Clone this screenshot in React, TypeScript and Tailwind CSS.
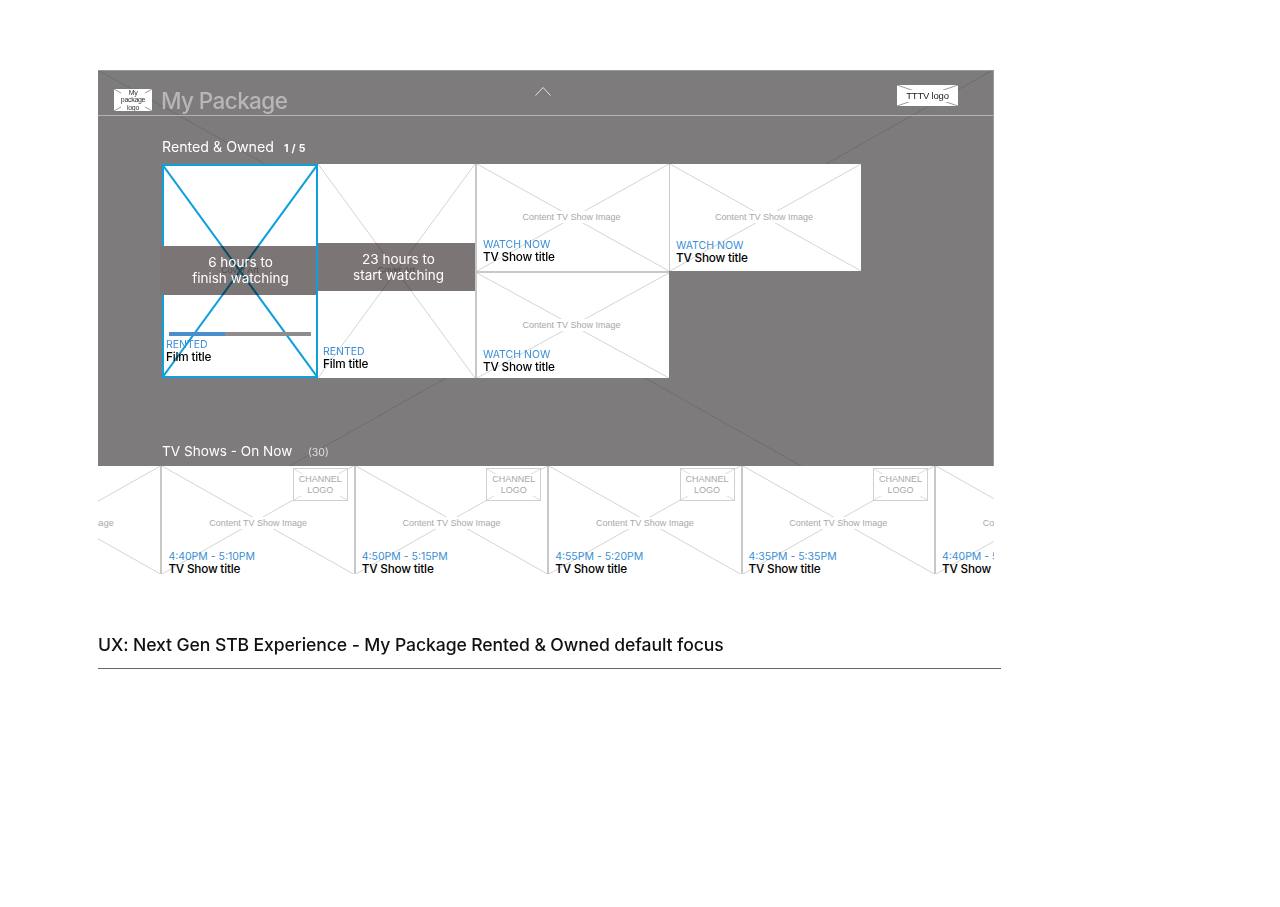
const ui = { fontFamily: '"Inter", "Noto Sans", sans-serif' };
const ph = { fontFamily: '"Liberation Sans", Arial, sans-serif' };

function Cross({ color = '#d4d4d4', width = 1 }: { color?: string; width?: number }) {
  return (
    <svg className="absolute inset-0 h-full w-full" viewBox="0 0 100 100" preserveAspectRatio="none" aria-hidden="true">
      <line x1="0" y1="0" x2="100" y2="100" stroke={color} strokeWidth={width} vectorEffect="non-scaling-stroke" />
      <line x1="100" y1="0" x2="0" y2="100" stroke={color} strokeWidth={width} vectorEffect="non-scaling-stroke" />
    </svg>
  );
}

function ImageLabel({ className }: { className: string }) {
  return (
    <div className={`absolute inset-0 flex items-center justify-center ${className}`}>
      <span className="bg-white px-1 text-[9px] leading-[12px] whitespace-nowrap text-[#a8a8a8]" style={ph}>
        Content TV Show Image
      </span>
    </div>
  );
}

function TextBlock({ eyebrow, title, className }: { eyebrow: string; title: string; className: string }) {
  return (
    <div className={`relative ${className}`}>
      <div className="text-[10.5px] leading-[13px] whitespace-nowrap text-[#3a8fd6]">{eyebrow}</div>
      <div className="text-[11.75px] leading-[13px] font-medium tracking-[-0.2px] whitespace-nowrap text-black">{title}</div>
    </div>
  );
}

function TvCard({ eyebrow, size, pad }: { eyebrow: string; size: string; pad: string }) {
  return (
    <div className={`relative flex flex-col justify-end bg-white ${size}`}>
      <Cross />
      <ImageLabel className="pr-[3px] pb-[2px]" />
      <TextBlock eyebrow={eyebrow} title="TV Show title" className={pad} />
    </div>
  );
}

function PosterCard({
  hours,
  line2,
  focused,
  band,
  bandText,
  pad,
}: {
  hours: string;
  line2: string;
  focused?: boolean;
  band: string;
  bandText: string;
  pad: string;
}) {
  return (
    <div className={`relative flex flex-col justify-end bg-white ${focused ? 'h-[214px] w-[156px]' : 'h-[214px] w-[157px]'}`}>
      {focused ? <Cross color="#0f9fdc" width={2} /> : <Cross />}
      <div className="absolute inset-0 flex items-center justify-center pb-[1px]">
        <span className="text-[9px] text-[#a8a8a8]" style={ph}>Cover Art</span>
      </div>
      {focused && <div className="absolute inset-0 border-2 border-[#0f9fdc]" />}
      <div className={`absolute bg-[#7b7675] mix-blend-multiply ${band}`} />
      {focused && <div className="absolute top-[82px] -left-[2px] h-[49px] w-[4px] bg-[#7b7675]" />}
      <div className={`absolute flex flex-col items-center justify-center text-[13.5px] leading-[16px] text-white ${bandText}`}>
        <span>{hours}</span>
        <span>{line2}</span>
      </div>
      {focused && (
        <div className="relative mx-[7px] mb-[2px] flex h-[4px] bg-[#8e8c8d]">
          <div className="h-full w-[56px] bg-[#4a8fcb]" />
        </div>
      )}
      <TextBlock eyebrow="RENTED" title="Film title" className={pad} />
    </div>
  );
}

function StripCard({ time, logo = true }: { time: string; logo?: boolean }) {
  return (
    <div className="relative flex h-[108px] w-[193.4px] shrink-0 flex-col justify-end overflow-hidden border-l-2 border-[#c8c8c8] bg-white">
      <Cross />
      <ImageLabel className="pt-[6px]" />
      {logo && (
        <div className="absolute top-[2px] right-[6px] flex h-[33px] w-[55px] items-center justify-center border border-[#d0d0d0] bg-white">
          <Cross color="#dcdcdc" />
          <span className="relative bg-white text-center text-[9px] leading-[11px] text-[#a8a8a8]" style={ph}>
            CHANNEL
            <br />
            LOGO
          </span>
        </div>
      )}
      <TextBlock eyebrow={time} title="TV Show title" className="-mb-[2px] pl-[6px]" />
    </div>
  );
}

export default function App() {
  const times = ['4:40PM - 5:10PM', '4:40PM - 5:10PM', '4:50PM - 5:15PM', '4:55PM - 5:20PM', '4:35PM - 5:35PM', '4:40PM - 5:10PM'];
  return (
    <div className="h-[907px] w-[1280px] overflow-hidden bg-white pt-[70px] pl-[98px]" style={ui}>
      <div className="relative h-[396px] w-[896px] overflow-hidden border-t border-r border-[#9a9a9a] bg-[#7d7b7c]">
        <svg className="absolute top-[-1px] left-0 h-[504px] w-[895px]" viewBox="0 0 895 504" aria-hidden="true">
          <line x1="0" y1="0" x2="895" y2="504" stroke="#6f6d6e" strokeWidth="1" />
          <line x1="895" y1="0" x2="0" y2="504" stroke="#6f6d6e" strokeWidth="1" />
        </svg>

        <header className="relative flex h-[45px] items-center border-b border-[#b4b4b4] pl-[16px]">
          <div className="relative mt-[14px] flex h-[22px] w-[38px] items-center justify-center overflow-hidden bg-white">
            <Cross color="#999999" />
            <span className="relative bg-white text-center text-[7px] leading-[7.5px] tracking-[-0.3px] text-[#333333]" style={ph}>
              My
              <br />
              package
              <br />
              logo
            </span>
          </div>
          <h1 className="mt-[16px] ml-[9px] text-[22.5px] leading-[30px] font-medium tracking-[-0.6px] whitespace-nowrap text-[#b8b6b7]">My Package</h1>
          <svg className="absolute top-[15px] left-[437px]" width="16" height="10" viewBox="0 0 16 10" aria-hidden="true">
            <path d="M0.5 9.5 L8 1.5 L15.5 9.5" fill="none" stroke="#e4e4e4" strokeWidth="1" />
          </svg>
          <div className="absolute top-[14px] right-[35px] flex h-[21px] w-[61px] items-center justify-center bg-white">
            <Cross color="#999999" />
            <span className="relative bg-white px-[1px] text-[9.5px] leading-[12px] tracking-[-0.2px] text-[#222222]" style={ph}>
              TTTV logo
            </span>
          </div>
        </header>

        <div className="relative ml-[64px] flex h-[48px] items-baseline pt-[21px] text-white">
          <h2 className="w-[122px] text-[14.2px] leading-[20px] whitespace-nowrap">Rented &amp; Owned</h2>
          <span className="text-[10.5px] font-bold tracking-[0.3px]">1 / 5</span>
        </div>

        <div className="relative ml-[64px] flex items-start">
          <PosterCard hours="6 hours to" line2="finish watching" focused band="top-[82px] left-0 h-[49px] w-[154px]" bandText="top-[82px] left-0 h-[49px] w-[157px] pb-[2px]" pad="pb-[14px] pl-[4px]" />
          <PosterCard hours="23 hours to" line2="start watching" band="top-[79px] left-0 h-[48px] w-[157px]" bandText="top-[79px] left-0 h-[48px] w-[161px]" pad="pb-[7px] pl-[5px]" />
          <div className="flex flex-col">
            <TvCard eyebrow="WATCH NOW" size="h-[107px] w-[194px] border-l-2 border-[#c8c8c8]" pad="pb-[7px] pl-[6px]" />
            <TvCard eyebrow="WATCH NOW" size="h-[107px] w-[194px] border-t-2 border-l-2 border-[#c8c8c8]" pad="pb-[4px] pl-[6px]" />
          </div>
          <TvCard eyebrow="WATCH NOW" size="h-[107px] w-[192px] border-l border-[#c8c8c8]" pad="pb-[6px] pl-[6px]" />
        </div>

        <div className="absolute bottom-[5px] left-[64px] flex items-baseline text-white">
          <h2 className="w-[146px] text-[13.6px] leading-[20px] whitespace-nowrap">TV Shows - On Now</h2>
          <span className="text-[10.5px] text-[#e0e0e0]">(30)</span>
        </div>
      </div>

      <div className="flex h-[108px] w-[896px] overflow-hidden">
        <div className="-ml-[131px] flex">
          {times.map((t, i) => (
            <StripCard key={i} time={t} logo={i !== 0} />
          ))}
        </div>
      </div>

      <div className="mt-[60px] w-[903px] border-b-[1.5px] border-[#666666] pb-[12px]">
        <h1 className="text-[17.6px] leading-[22px] font-medium tracking-[-0.1px] whitespace-nowrap text-[#111111]">
          UX: Next Gen STB Experience - My Package Rented &amp; Owned default focus
        </h1>
      </div>
    </div>
  );
}
